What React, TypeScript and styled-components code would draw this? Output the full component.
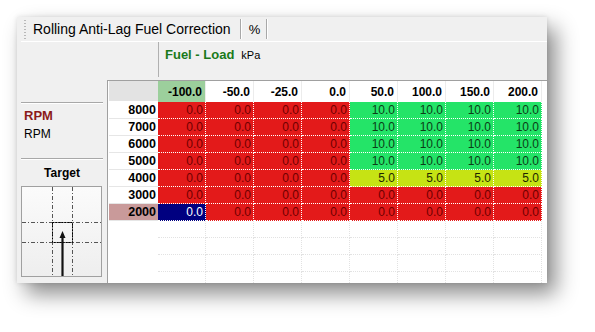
import React from "react";
import styled, { createGlobalStyle } from "styled-components";

const Global = createGlobalStyle`
  html, body { margin: 0; padding: 0; background: #ffffff; }
  body { font-family: "Liberation Sans", Arial, sans-serif; }
`;

const Page = styled.div`
  width: 595px;
  height: 332px;
  padding: 17px 0 0 17px;
  box-sizing: border-box;
  overflow: hidden;
`;

const Window = styled.div`
  width: 530px;
  height: 266px;
  background: #f0f0f0;
  display: flex;
  flex-direction: column;
  box-shadow: 9px 11px 20px rgba(0, 0, 0, 0.45), 0 0 5px rgba(0, 0, 0, 0.12);
  overflow: hidden;
`;

const TitleBar = styled.div`
  height: 25px;
  margin-left: 4px;
  display: flex;
  align-items: center;
  border-bottom: 1px solid #ffffff;
  box-sizing: border-box;
`;

const Grip = styled.div`
  width: 2px;
  height: 19px;
  margin: 0 7px 0 3px;
  background-image: linear-gradient(#b8b8b8 50%, transparent 50%);
  background-size: 2px 3px;
`;

const TitleText = styled.span`
  font-size: 14px;
  color: #000;
  padding-right: 9px;
`;

const Sep = styled.div`
  width: 1px;
  height: 20px;
  background: #a8a8a8;
  box-shadow: 1px 0 0 #fff;
`;

const Unit = styled.span`
  font-size: 13px;
  padding: 0 6px 0 8px;
`;

const AxisHeader = styled.div`
  height: 38px;
  display: flex;
`;

const AxisSpacer = styled.div`
  width: 141px;
  border-right: 1px solid #b0b0b0;
  margin-bottom: 3px;
`;

const AxisLabel = styled.div`
  padding: 5px 0 0 6px;
  display: flex;
  align-items: baseline;
  gap: 7px;
`;

const AxisName = styled.span`
  font-size: 13px;
  font-weight: bold;
  color: #1a7a1a;
`;

const AxisUnit = styled.span`
  font-size: 11px;
  color: #000;
`;

const Body = styled.div`
  flex: 1;
  display: flex;
  min-height: 0;
`;

const LeftPanel = styled.div`
  width: 90px;
  display: flex;
  flex-direction: column;
  padding: 0 4px;
  box-sizing: border-box;
`;

const TopGap = styled.div`
  height: 22px;
`;

const Etched = styled.div`
  height: 1px;
  background: #a8a8a8;
  border-bottom: 1px solid #fff;
`;

const YName = styled.div`
  font-size: 13px;
  font-weight: bold;
  color: #8b1a1a;
  padding: 4px 0 0 3px;
`;

const YUnit = styled.div`
  font-size: 12px;
  color: #000;
  padding: 4px 0 0 3px;
  height: 31px;
`;

const TargetTitle = styled.div`
  font-size: 12px;
  font-weight: bold;
  text-align: center;
  padding: 6px 0 0 0;
  height: 20px;
`;

const TargetBox = styled.div`
  width: 81px;
  height: 91px;
  border: 1px solid #a0a0a0;
  box-sizing: border-box;
  background: linear-gradient(180deg, #fbfbfb 0%, #eeeeee 100%);
`;

const GridArea = styled.div`
  flex: 1;
  background: #ffffff;
  border-left: 1px solid #a0a0a0;
  border-top: 1px solid #a0a0a0;
  overflow: hidden;
`;

const Grid = styled.div`
  display: grid;
  grid-template-columns: 50px repeat(8, 48px);
  grid-template-rows: 21px repeat(11, 17px);
`;

const Corner = styled.div`
  background: #e3e3e3;
  margin-left: 1px;
  border-bottom: 1px solid #ffffff;
`;

const ColHead = styled.div<{ $active?: boolean }>`
  background: ${(p) => (p.$active ? "#9ccf9c" : "#ffffff")};
  border-right: 1px solid #ececec;
  font-size: 12px;
  font-weight: bold;
  color: #000;
  text-align: right;
  padding: 4px 3px 0 0;
  box-sizing: border-box;
`;

const RowHead = styled.div<{ $active?: boolean }>`
  background: ${(p) => (p.$active ? "#c99a9a" : "#ffffff")};
  border-bottom: 1px solid #e6e6e6;
  margin-left: 1px;
  font-size: 12.5px;
  font-weight: bold;
  color: #000;
  text-align: right;
  padding: 1px 2px 0 0;
  box-sizing: border-box;
`;

const palette: Record<string, { bg: string; fg: string }> = {
  red: { bg: "#e31a1a", fg: "#6e0000" },
  green: { bg: "#24e468", fg: "#0b3d17" },
  yellow: { bg: "#c6e314", fg: "#1e2600" },
  sel: { bg: "#000080", fg: "#ffffff" },
};

const Cell = styled.div<{ $tone: string }>`
  background: ${(p) => palette[p.$tone].bg};
  color: ${(p) => palette[p.$tone].fg};
  border-right: 1px dotted #ffffff;
  border-bottom: 1px dotted #ffffff;
  font-size: 12px;
  text-align: right;
  padding: 1px 2px 0 0;
  box-sizing: border-box;
`;

const EmptyHead = styled.div``;

const EmptyCell = styled.div`
  border-right: 1px dotted #e2e2e2;
  border-bottom: 1px dotted #e2e2e2;
  box-sizing: border-box;
`;

const cols = ["-100.0", "-50.0", "-25.0", "0.0", "50.0", "100.0", "150.0", "200.0"];
const rows: { rpm: string; vals: string[] }[] = [
  { rpm: "8000", vals: ["0.0", "0.0", "0.0", "0.0", "10.0", "10.0", "10.0", "10.0"] },
  { rpm: "7000", vals: ["0.0", "0.0", "0.0", "0.0", "10.0", "10.0", "10.0", "10.0"] },
  { rpm: "6000", vals: ["0.0", "0.0", "0.0", "0.0", "10.0", "10.0", "10.0", "10.0"] },
  { rpm: "5000", vals: ["0.0", "0.0", "0.0", "0.0", "10.0", "10.0", "10.0", "10.0"] },
  { rpm: "4000", vals: ["0.0", "0.0", "0.0", "0.0", "5.0", "5.0", "5.0", "5.0"] },
  { rpm: "3000", vals: ["0.0", "0.0", "0.0", "0.0", "0.0", "0.0", "0.0", "0.0"] },
  { rpm: "2000", vals: ["0.0", "0.0", "0.0", "0.0", "0.0", "0.0", "0.0", "0.0"] },
];

const toneFor = (v: string, r: number, c: number) => {
  if (r === 6 && c === 0) return "sel";
  if (v === "10.0") return "green";
  if (v === "5.0") return "yellow";
  return "red";
};

const TargetChart = () => (
  <svg width="79" height="89" viewBox="0 0 79 89">
    <g stroke="#555" strokeWidth="1" fill="none" strokeDasharray="4 2 1 2">
      <line x1="30.5" y1="0" x2="30.5" y2="89" />
      <line x1="50.5" y1="0" x2="50.5" y2="89" />
      <line x1="0" y1="35.5" x2="79" y2="35.5" />
      <line x1="0" y1="55.5" x2="79" y2="55.5" />
    </g>
    <rect x="30.5" y="35.5" width="20" height="20" fill="none" stroke="#000" strokeDasharray="2 1" />
    <line x1="40.5" y1="89" x2="40.5" y2="50" stroke="#111" strokeWidth="2.2" />
    <path d="M37.5 51 L40.5 44 L43.5 51 Z" fill="#111" />
  </svg>
);

export default function App() {
  return (
    <>
      <Global />
      <Page>
        <Window>
          <TitleBar>
            <Grip />
            <TitleText>Rolling Anti-Lag Fuel Correction</TitleText>
            <Sep />
            <Unit>%</Unit>
            <Sep />
          </TitleBar>
          <AxisHeader>
            <AxisSpacer />
            <AxisLabel>
              <AxisName>Fuel - Load</AxisName>
              <AxisUnit>kPa</AxisUnit>
            </AxisLabel>
          </AxisHeader>
          <Body>
            <LeftPanel>
              <TopGap />
              <Etched />
              <YName>RPM</YName>
              <YUnit>RPM</YUnit>
              <Etched />
              <TargetTitle>Target</TargetTitle>
              <TargetBox>
                <TargetChart />
              </TargetBox>
            </LeftPanel>
            <GridArea>
              <Grid>
                <Corner />
                {cols.map((c, i) => (
                  <ColHead key={c} $active={i === 0}>
                    {c}
                  </ColHead>
                ))}
                {rows.map((r, ri) => (
                  <React.Fragment key={r.rpm}>
                    <RowHead $active={ri === 6}>{r.rpm}</RowHead>
                    {r.vals.map((v, ci) => (
                      <Cell key={ci} $tone={toneFor(v, ri, ci)}>
                        {v}
                      </Cell>
                    ))}
                  </React.Fragment>
                ))}
                {Array.from({ length: 4 }).map((_, ri) => (
                  <React.Fragment key={"e" + ri}>
                    <EmptyHead />
                    {cols.map((c) => (
                      <EmptyCell key={c} />
                    ))}
                  </React.Fragment>
                ))}
              </Grid>
            </GridArea>
          </Body>
        </Window>
      </Page>
    </>
  );
}
